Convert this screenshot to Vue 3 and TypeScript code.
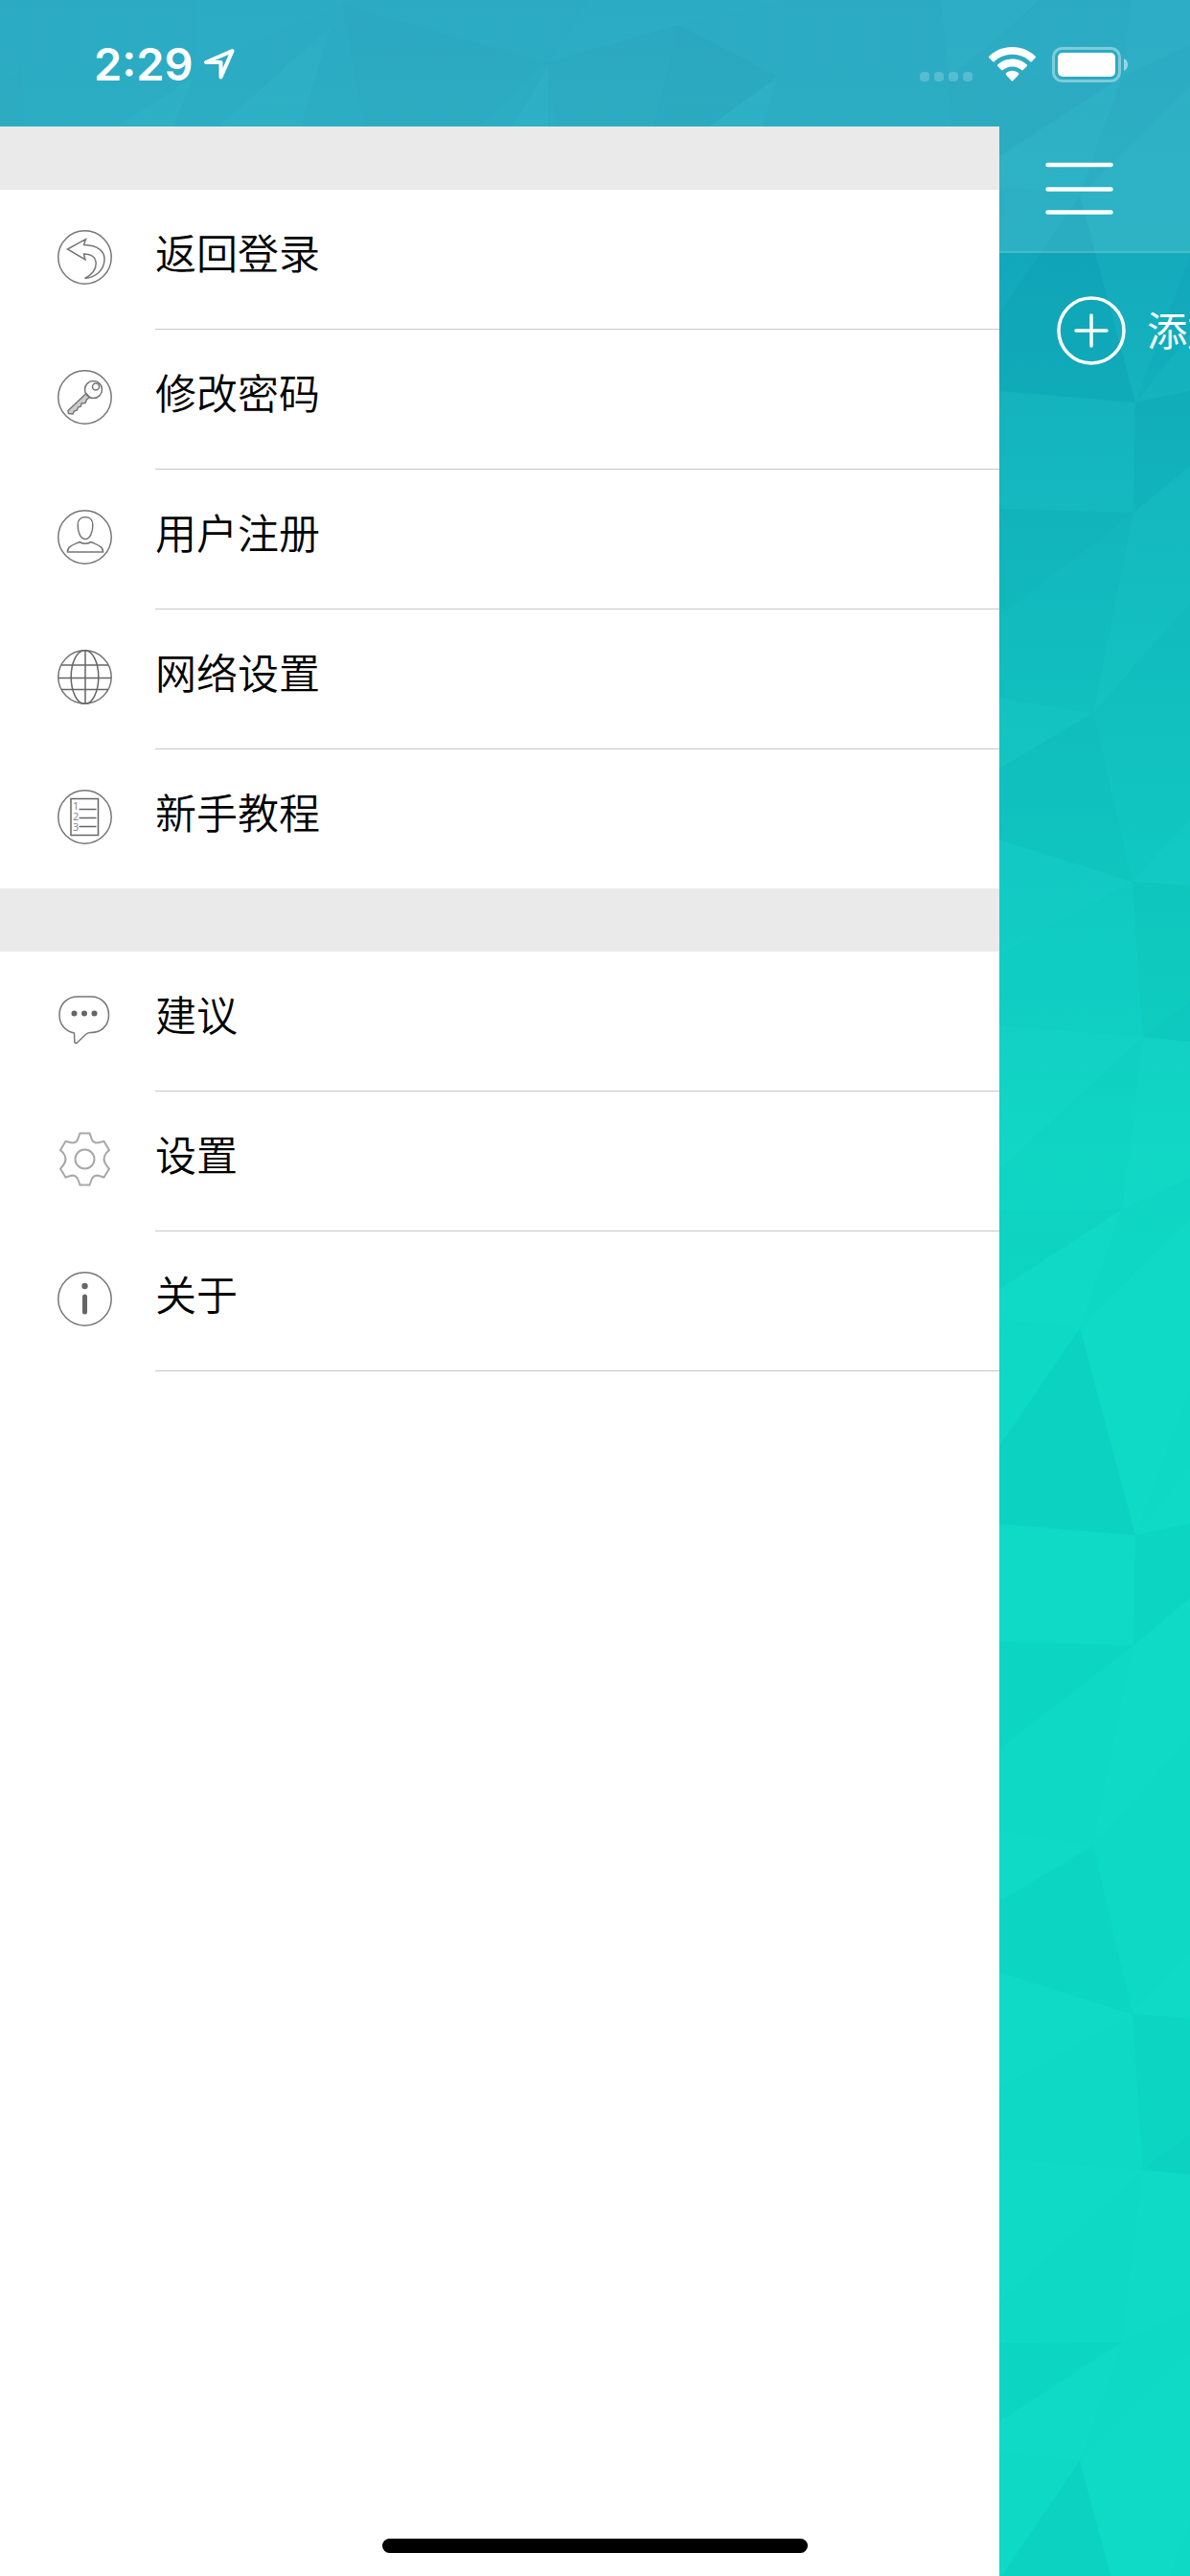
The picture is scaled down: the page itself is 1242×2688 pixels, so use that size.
<script setup lang="ts">
type IconName = 'back' | 'key' | 'user' | 'globe' | 'guide' | 'chat' | 'gear' | 'info'

interface MenuItem {
  icon: IconName
  label: string
}

interface Facet {
  points: string
  tone: 'light' | 'pale' | 'dark' | 'deep'
}

const groups: MenuItem[][] = [
  [
    { icon: 'back', label: '返回登录' },
    { icon: 'key', label: '修改密码' },
    { icon: 'user', label: '用户注册' },
    { icon: 'globe', label: '网络设置' },
    { icon: 'guide', label: '新手教程' },
  ],
  [
    { icon: 'chat', label: '建议' },
    { icon: 'gear', label: '设置' },
    { icon: 'info', label: '关于' },
  ],
]

// The facet strip repeats down the backdrop with this period.
const period = 1182
const offsets = [-period, 0, period, 2 * period]

const facets: Facet[] = [
  { points: '1127,204 1043,327 1043,408 1185,420', tone: 'deep' },
  { points: '1043,195 1127,204 1043,327', tone: 'pale' },
  { points: '1127,204 1185,420 1242,266 1242,90', tone: 'light' },
  { points: '1185,420 1242,350 1242,408', tone: 'light' },
  { points: '1185,420 1183,535 1242,486 1242,408', tone: 'dark' },
  { points: '1043,408 1185,420 1183,535 1043,531', tone: 'light' },
  { points: '1043,531 1183,535 1043,643', tone: 'dark' },
  { points: '1043,728 1141,744 1043,802', tone: 'light' },
  { points: '1183,535 1141,744 1242,629 1242,486', tone: 'light' },
  { points: '1141,744 1182,920 1043,876 1043,802', tone: 'dark' },
  { points: '1043,876 1182,920 1043,997', tone: 'light' },
  { points: '1043,997 1182,920 1193,1082 1043,1069', tone: 'pale' },
  { points: '1182,920 1242,855 1242,924', tone: 'light' },
  { points: '1182,920 1193,1082 1242,1045 1242,924', tone: 'dark' },
  { points: '1193,1082 1242,1045 1242,1087', tone: 'deep' },
  { points: '970,1064 1193,1082 1043,1220 990,1262', tone: 'light' },
  { points: '1193,1082 1171,1262 1242,1229 1242,1087', tone: 'light' },
  { points: '990,1264 1171,1262 1043,1345 996,1370', tone: 'dark' },
  { points: '1043,1345 1171,1262 1127,1386 1043,1377', tone: 'light' },
]

const topFacets: Facet[] = [
  { points: '357,5 572,65 500,132 380,132', tone: 'dark' },
  { points: '708,26 812,80 740,132 682,132', tone: 'deep' },
  { points: '572,65 708,26 682,132 580,132', tone: 'dark' },
  { points: '0,90 22,70 26,132 0,132', tone: 'dark' },
  { points: '122,132 200,82 182,132', tone: 'light' },
  { points: '228,132 345,28 314,132', tone: 'light' },
  { points: '535,132 572,70 572,132', tone: 'light' },
  { points: '740,132 812,80 796,132', tone: 'light' },
  { points: '205,0 357,0 357,5 205,70', tone: 'pale' },
  { points: '615,0 820,0 708,26 572,65', tone: 'pale' },
]
</script>

<template>
  <div class="app">
    <svg class="backdrop" viewBox="0 0 1242 2688" preserveAspectRatio="xMaxYMin slice" aria-hidden="true">
      <defs>
        <linearGradient id="sea" x1="0" y1="0" x2="0" y2="1">
          <stop offset="0" stop-color="#13a0bd" />
          <stop offset="0.1" stop-color="#12a7bb" />
          <stop offset="0.2" stop-color="#12b6bd" />
          <stop offset="0.34" stop-color="#10c8c1" />
          <stop offset="0.45" stop-color="#0fd5c3" />
          <stop offset="0.52" stop-color="#0dd9c4" />
          <stop offset="1" stop-color="#0dd9c4" />
        </linearGradient>
      </defs>
      <rect width="1242" height="2688" fill="url(#sea)" />
      <g v-for="offset in offsets" :key="offset" :transform="`translate(0 ${offset})`">
        <polygon v-for="f in facets" :key="f.points" :points="f.points" :class="f.tone" />
      </g>
      <polygon v-for="f in topFacets" :key="f.points" :points="f.points" :class="f.tone" />
    </svg>

    <header class="status">
      <span class="time">2:29</span>
      <svg class="locate" width="34" height="34" viewBox="0 0 34 34" aria-hidden="true">
        <path d="M30.500 3.200 3 15H18.500V30.500Z" fill="none" stroke="#fff" stroke-width="4" stroke-linejoin="round" />
      </svg>
      <div class="indicators">
        <svg width="55" height="37" viewBox="0 0 55 37" aria-hidden="true">
          <g fill="#fff" opacity="0.2">
            <rect v-for="n in 4" :key="n" :x="(n - 1) * 15" y="26" width="10" height="10" rx="4" />
          </g>
        </svg>
        <svg width="49" height="37" viewBox="0 0 49 37" fill="#fff" aria-hidden="true">
          <path d="M24.500 0C15 0 6.500 3.700 0.300 9.700Q-0.300 10.500 0.300 11.300L4.200 15.200Q5 15.900 5.800 15.200C10.700 10.600 17.200 7.800 24.500 7.800S38.300 10.600 43.200 15.200Q44 15.900 44.800 15.200L48.700 11.300Q49.300 10.500 48.700 9.700C42.500 3.700 34 0 24.500 0Z" />
          <path d="M24.500 12.500C18.500 12.500 13.200 14.800 9.200 18.500Q8.500 19.300 9.200 20.100L13.200 24.100Q14 24.700 14.800 24.100C17.400 21.800 20.700 20.400 24.500 20.400S31.600 21.800 34.200 24.100Q35 24.700 35.800 24.100L39.800 20.100Q40.500 19.300 39.800 18.500C35.800 14.800 30.500 12.500 24.500 12.500Z" />
          <path d="M24.500 24.800C22 24.800 19.700 25.700 17.900 27.200Q17.200 28.100 17.900 28.900L23.700 35.300Q24.500 36 25.300 35.300L31.100 28.900Q31.800 28.100 31.100 27.200C29.300 25.700 27 24.800 24.500 24.800Z" />
        </svg>
        <svg width="80" height="37" viewBox="0 0 80 37" aria-hidden="true">
          <rect x="1.500" y="1.500" width="69" height="34" rx="9" fill="none" stroke="#fff" stroke-opacity="0.4" stroke-width="3" />
          <rect x="6" y="6" width="60" height="25" rx="5" fill="#fff" />
          <path d="M75 12Q79 14 79 18.500T75 25Z" fill="#fff" fill-opacity="0.5" />
        </svg>
      </div>
    </header>

    <div class="body">
      <nav class="drawer">
        <ul v-for="(group, g) in groups" :key="g" class="group">
          <li v-for="item in group" :key="item.label" class="row">
            <button type="button" class="item">
              <svg class="icon" width="57" height="57" viewBox="0 0 57 57" aria-hidden="true">
                <circle v-if="item.icon !== 'chat' && item.icon !== 'gear'" cx="28.500" cy="28.500" r="27.700" />
                <path v-if="item.icon === 'back'" d="M10.500 20 29.500 9.500 27.500 15.500C42 16 49.500 22 49 31 48.500 42 40 49.500 28.500 50.500 37 46 41 40 40 33 39 27 34 25 27.500 25L29 31Z" />
                <template v-else-if="item.icon === 'key'">
                  <path class="shaft" d="M30 24.500 11 42.500 11.500 45.500 16 46 17.500 43 20.500 42 21.500 39 24.500 38 25 35 29 34.500 30.500 31 33.500 28.500Z" />
                  <circle cx="37.500" cy="20.500" r="9" />
                  <circle cx="40" cy="17.500" r="3.500" />
                </template>
                <template v-else-if="item.icon === 'user'">
                  <path d="M29 7.500C23.500 7.500 21 11 21.200 16 21 23 24 30.500 29 30.500S37 23 36.800 16C37 11 34.500 7.500 29 7.500Z" />
                  <path d="M10.500 44C10 38 17 36.500 23 33.500Q29 37 35 33.500C41 36.500 48 38 47.500 44Z" />
                </template>
                <template v-else-if="item.icon === 'globe'">
                  <path class="strong" d="M29 1V56M4 16H53M1 29.500H56M4 41.500H53" />
                  <ellipse class="strong" cx="28.500" cy="28.500" rx="14.300" ry="28" />
                </template>
                <template v-else-if="item.icon === 'guide'">
                  <path class="strong" d="M14 9.500H42.500V47.500H14ZM22.500 20.500H40.500M22.500 29.500H40.500M22.500 38.500H40.500" />
                  <text x="16" y="21">1</text>
                  <text x="16" y="32">2</text>
                  <text x="16" y="43">3</text>
                </template>
                <template v-else-if="item.icon === 'chat'">
                  <path d="M17.500 43C8 41 2 34 2 24 2 13 10 5 21 5H35C46 5 53.500 13 53.500 24S46 42.500 35 42.500Q32 42.300 30 44L20.500 53Q18 54.500 17.800 52Z" />
                  <g class="solid">
                    <circle cx="17.500" cy="22.500" r="3" />
                    <circle cx="28" cy="22.500" r="3" />
                    <circle cx="38.500" cy="22.500" r="3" />
                  </g>
                </template>
                <g v-else-if="item.icon === 'gear'" class="soft">
                  <path d="M23.500 1.500H33.500L35.500 7Q37 12 42 11.500L48.500 10 54 19 51 22Q46 28.500 51 35L54 38.500 48.500 47.500 42 45.500Q37 45.500 35.500 50L33.500 55.500H23.500L21.500 50Q20 45.500 15 45.500L8.500 47.500 3 38.500 6 35Q11 28.500 6 22L3 19 8.500 10 15 11.500Q20 12 21.500 7Z" />
                  <circle cx="28.500" cy="28.500" r="10" />
                </g>
                <g v-else-if="item.icon === 'info'" class="solid">
                  <circle cx="28.500" cy="15" r="3.200" />
                  <rect x="26" y="23.500" width="5" height="21" rx="2.500" />
                </g>
              </svg>
              <span class="label">{{ item.label }}</span>
            </button>
          </li>
        </ul>
      </nav>

      <main class="page">
        <div class="toolbar">
          <button type="button" class="plain" aria-label="菜单">
            <svg width="71" height="56" viewBox="0 0 71 56" stroke="#fff" stroke-width="4.500" stroke-linecap="round" aria-hidden="true">
              <path d="M2.500 3H68.500M2.500 28.500H68.500M2.500 52.500H68.500" />
            </svg>
          </button>
        </div>
        <button type="button" class="plain add">
          <svg width="72" height="72" viewBox="0 0 72 72" fill="none" stroke="#fff" stroke-width="3.500" stroke-linecap="round" aria-hidden="true">
            <circle cx="36" cy="36" r="34" />
            <path d="M36 20V52M20 36H52" />
          </svg>
          <span>添加</span>
        </button>
      </main>
    </div>

    <div class="home-bar"></div>
  </div>
</template>

<style>
body {
  margin: 0;
}
</style>

<style scoped>
.app {
  position: relative;
  display: flex;
  flex-direction: column;
  min-height: 100vh;
  overflow: hidden;
  font-family: 'Noto Sans CJK SC', sans-serif;
}

.backdrop {
  position: absolute;
  inset: 0;
  width: 100%;
  height: 100%;
}

.light {
  fill: rgba(60, 255, 235, 0.05);
}

.pale {
  fill: rgba(60, 255, 235, 0.02);
}

.dark {
  fill: rgba(0, 130, 140, 0.03);
}

.deep {
  fill: rgba(0, 130, 150, 0.07);
}

.status {
  position: relative;
  display: flex;
  align-items: center;
  box-sizing: border-box;
  height: 132px;
  padding: 2px 64px 0 98px;
  background: rgba(255, 255, 255, 0.11);
  color: #fff;
}

.time {
  font: 600 47px/56px Inter, sans-serif;
}

.locate {
  margin-left: 10px;
}

.indicators {
  display: flex;
  gap: 17px;
  margin-left: auto;
}

.body {
  position: relative;
  display: flex;
  flex: 1;
}

.drawer {
  flex: none;
  width: 84%;
  background: #fff;
}

.group {
  margin: 0;
  padding: 66px 0 0;
  list-style: none;
  background: linear-gradient(#eaeaea, #eaeaea) top / 100% 66px no-repeat;
}

.item {
  display: flex;
  width: 100%;
  height: 146px;
  padding: 0 0 0 60px;
  border: 0;
  background: none;
  font: inherit;
  color: #000;
  text-align: left;
}

.group:first-child .row:last-child .item {
  height: 145px;
}

.group:first-child .row:last-child .label {
  border-bottom: 0;
}

.icon {
  flex: none;
  margin: 42px 45px 0 0;
  fill: none;
  stroke: #777;
  stroke-width: 1.5;
}

.icon .strong {
  stroke: #666;
}

.icon .shaft {
  fill: #ccc;
}

.icon .soft {
  stroke: #a8a8a8;
  stroke-width: 2;
}

.icon .solid {
  fill: #666;
  stroke: none;
}

.icon text {
  fill: #888;
  stroke: none;
  font: 11px 'Noto Sans', sans-serif;
}

.label {
  flex: 1;
  box-sizing: border-box;
  height: 100%;
  border-bottom: 1px solid #c8c7cc;
  font-size: 43px;
  font-weight: 350;
  line-height: 128px;
}

.page {
  flex: 1;
  min-width: 0;
  overflow: hidden;
}

.toolbar {
  display: flex;
  align-items: center;
  box-sizing: border-box;
  height: 132px;
  padding-left: 48px;
  border-bottom: 2px solid rgba(255, 255, 255, 0.12);
  background: rgba(255, 255, 255, 0.11);
}

.plain {
  display: flex;
  align-items: center;
  padding: 0;
  border: 0;
  background: none;
  font: inherit;
  color: #fff;
}

.add {
  gap: 22px;
  margin: 45px 0 0 60px;
  font-size: 42px;
  line-height: 68px;
  white-space: nowrap;
}

.add span {
  padding-bottom: 4px;
}

.add svg {
  flex: none;
}

.home-bar {
  position: absolute;
  bottom: 24px;
  left: 50%;
  width: 444px;
  height: 15px;
  border-radius: 8px;
  background: #000;
  transform: translateX(-50%);
}
</style>
